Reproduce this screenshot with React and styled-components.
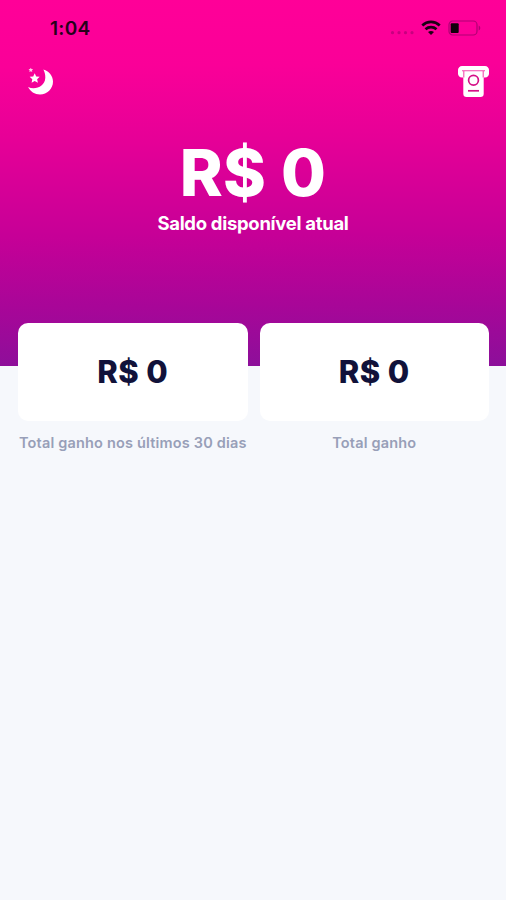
import React from 'react';
import styled, { createGlobalStyle } from 'styled-components';

const GlobalStyle = createGlobalStyle`
  * {
    box-sizing: border-box;
  }

  body {
    margin: 0;
    background: #f6f8fc;
    font-family: Inter, "Liberation Sans", sans-serif;
  }
`;

const Screen = styled.main`
  height: 900px;
  overflow: hidden;
  background: #f6f8fc;
`;

const Header = styled.header`
  height: 366px;
  background: linear-gradient(179.5deg, #ff0098 0%, #fa0098 18%, #e60097 38%, #c60097 64%, #a80698 83%, #8c0f9a 100%);
`;

const StatusBar = styled.div`
  display: flex;
  align-items: center;
  justify-content: space-between;
  height: 56px;
  padding: 0 25px 0 50px;
`;

const Time = styled.span`
  padding-top: 2px;
  font-size: 19px;
  font-weight: 600;
  line-height: 24px;
  letter-spacing: 0.3px;
  color: #26001b;
`;

const StatusIcons = styled.div`
  display: flex;
  align-items: center;
  gap: 7px;
`;

const Toolbar = styled.nav`
  display: flex;
  align-items: center;
  justify-content: space-between;
  height: 50px;
  padding: 0 16px 0 26px;
`;

const IconButton = styled.button`
  display: flex;
  padding: 0;
  border: 0;
  background: none;
  color: #fff;
`;

const Balance = styled.section`
  padding-top: 27px;
  text-align: center;
  color: #fff;
`;

const BalanceValue = styled.h1`
  margin: 0;
  font-size: 65px;
  font-weight: 800;
  line-height: 79px;
  letter-spacing: 0.4px;
`;

const BalanceLabel = styled.p`
  margin: 0;
  font-size: 18.5px;
  font-weight: 650;
  line-height: 22px;
  letter-spacing: -0.3px;
`;

const Totals = styled.section`
  display: grid;
  grid-template-columns: 1fr 1fr;
  gap: 12px;
  margin-top: -43px;
  padding: 0 17px 0 18px;
`;

const Total = styled.div`
  display: flex;
  flex-direction: column;
  align-items: center;
`;

const TotalCard = styled.div`
  display: flex;
  align-items: center;
  justify-content: center;
  width: 100%;
  height: 98px;
  padding-bottom: 1px;
  border-radius: 10px;
  background: #fff;
  font-size: 31px;
  font-weight: 800;
  letter-spacing: 0.4px;
  color: #11123a;
`;

const TotalLabel = styled.span`
  margin-top: 12px;
  font-size: 14.5px;
  font-weight: 600;
  line-height: 20px;
  letter-spacing: 0.18px;
  white-space: nowrap;
  color: #989fb8;
`;

const SignalIcon = () => (
  <svg width="24" height="14" viewBox="0 0 24 14" fill="#c80080">
    <circle cx="2.5" cy="11.7" r="1.6" />
    <circle cx="9" cy="11.7" r="1.6" />
    <circle cx="15.5" cy="11.7" r="1.6" />
    <circle cx="22" cy="11.7" r="1.6" />
  </svg>
);

const WifiIcon = () => (
  <svg width="20" height="16" viewBox="0 0 20 16" fill="none" stroke="#1c0014" strokeWidth="2.7">
    <path d="M1.3 5.4C6.2.8 13.8.8 18.7 5.4" />
    <path d="M4.5 9.2C7.6 6.4 12.4 6.4 15.5 9.2" />
    <path d="M10 15 7 12C8.7 10.5 11.3 10.5 13 12Z" fill="#1c0014" stroke="none" />
  </svg>
);

const BatteryIcon = () => (
  <svg width="33" height="16" viewBox="0 0 33 16">
    <rect x="1" y="1" width="28" height="14" rx="3.8" fill="none" stroke="#b00074" strokeWidth="1.2" />
    <path d="M30.7 5.5C32.8 6.3 32.8 9.7 30.7 10.5Z" fill="#b00074" />
    <rect x="2.7" y="3.3" width="8" height="9.6" rx="1" fill="#10000b" />
  </svg>
);

const MoonIcon = () => (
  <svg width="28" height="28" viewBox="0 0 28 28" fill="currentColor">
    <path d="M17.4 2.5C23 4.1 27 8.9 27 14.5 27 21.7 21.2 27.5 14 27.5 8.7 27.5 4.2 24.4 2.1 20 8.9 23.2 19 19.8 19.3 10.8 19.4 7.6 18.7 5 17.4 2.5Z" />
    <path d="m8.7 6.3 1.5 3.1 3.5.4-2.6 2.4.8 3.5-3.2-1.8-3.1 1.8.7-3.5-2.6-2.4 3.5-.4Z" />
    <path d="m4.8.8.7 1.3 1.6.2-1.2 1.1.4 1.6-1.5-.8-1.5.8.4-1.6-1.2-1.1 1.6-.2Z" opacity="0.8" />
  </svg>
);

const WithdrawIcon = () => (
  <svg width="33" height="33" viewBox="0 0 33 33">
    <path
      d="M5 1H28C30.2 1 32 2.8 32 5V8.5C32 10.8 30.6 12.5 28 12.5H5C2.4 12.5 1 10.8 1 8.5V5C1 2.8 2.8 1 5 1Z"
      fill="currentColor"
    />
    <path d="M6.3 6H26.7V28.8C26.7 31 25.5 32 23.5 32H9.5C7.5 32 6.3 31 6.3 28.8Z" fill="currentColor" />
    <path d="M5 5.8H28M6.8 6V12.5M26.2 6V12.5" fill="none" stroke="#f54eae" strokeWidth="1.1" />
    <circle cx="16.5" cy="15.2" r="4.9" fill="none" stroke="#d51087" strokeWidth="1.7" />
    <path d="M11 25.8H22" stroke="#d51087" strokeWidth="1.7" />
  </svg>
);

const totals = [
  { value: 'R$ 0', label: 'Total ganho nos últimos 30 dias' },
  { value: 'R$ 0', label: 'Total ganho' },
];

const App = () => {
  return (
    <Screen>
      <GlobalStyle />
      <Header>
        <StatusBar>
          <Time>1:04</Time>
          <StatusIcons>
            <SignalIcon />
            <WifiIcon />
            <BatteryIcon />
          </StatusIcons>
        </StatusBar>
        <Toolbar>
          <IconButton aria-label="Tema escuro">
            <MoonIcon />
          </IconButton>
          <IconButton aria-label="Sacar">
            <WithdrawIcon />
          </IconButton>
        </Toolbar>
        <Balance>
          <BalanceValue>R$ 0</BalanceValue>
          <BalanceLabel>Saldo disponível atual</BalanceLabel>
        </Balance>
      </Header>
      <Totals>
        {totals.map((total) => (
          <Total key={total.label}>
            <TotalCard>{total.value}</TotalCard>
            <TotalLabel>{total.label}</TotalLabel>
          </Total>
        ))}
      </Totals>
    </Screen>
  );
};

export default App;
